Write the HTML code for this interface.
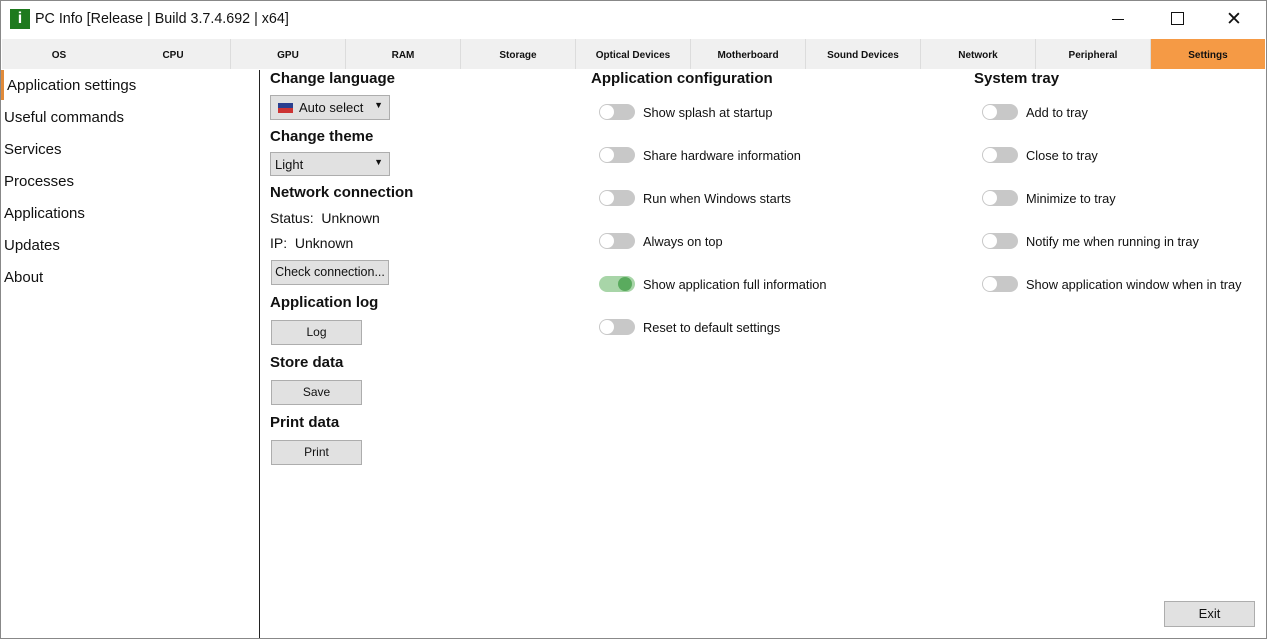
<!DOCTYPE html><html><head><style>
body{margin:0;width:1267px;height:639px;background:#fff;font-family:"Liberation Sans",sans-serif;position:relative;overflow:hidden;border:0}
.a{position:absolute}
.tab{position:absolute;top:39px;height:30px;width:114px;background:#f0f0f0;border-right:1px solid #dcdcdc;font-size:10px;font-weight:bold;text-align:center;line-height:34px;color:#111}
.side{position:absolute;left:4px;font-size:15px;color:#111}
h3{position:absolute;margin:0;font-size:15px;font-weight:bold;color:#111}
.t{position:absolute;font-size:14px;color:#111}
.btn{position:absolute;background:#e1e1e1;border:1px solid #adadad;font-size:12px;text-align:center;box-sizing:border-box;color:#111}
.sw{position:absolute;width:36px;height:16px;border-radius:8px;background:#c8c8c8}
.sw:after{content:"";position:absolute;left:1px;top:1px;width:14px;height:14px;border-radius:50%;background:#fff}
.sw.on{background:#a8d5a8}.sw.on:after{left:19px;background:#5aab5e}
.lb{position:absolute;font-size:12.8px;color:#111}
</style></head><body>
<div class="a" style="left:0;top:0;width:1267px;height:639px;border:1px solid #888;box-sizing:border-box"></div>
<div class="a" style="left:10px;top:9px;width:20px;height:20px;background:#1e7a1e;color:#fff;font-weight:bold;font-size:16px;text-align:center;line-height:20px">i</div>
<div class="a" style="left:35px;top:11px;font-size:14.3px;color:#111">PC Info [Release | Build 3.7.4.692 | x64]</div>
<div class="a" style="left:1112px;top:19px;width:12px;height:1px;background:#111"></div>
<div class="a" style="left:1171px;top:12px;width:11px;height:11px;border:1px solid #111"></div>
<div class="a" style="left:1226px;top:8px;font-size:19px;color:#111">✕</div>
<div class="a" style="left:2px;top:39px;width:1263px;height:30px;background:#f0f0f0"></div>
<div class="tab" style="left:2px">OS</div><div class="tab" style="left:116px">CPU</div><div class="tab" style="left:231px">GPU</div><div class="tab" style="left:346px">RAM</div><div class="tab" style="left:461px">Storage</div><div class="tab" style="left:576px">Optical Devices</div><div class="tab" style="left:691px">Motherboard</div><div class="tab" style="left:806px">Sound Devices</div><div class="tab" style="left:921px">Network</div><div class="tab" style="left:1036px">Peripheral</div>
<div class="tab" style="left:1151px;background:#f59a45;border:0;width:114px">Settings</div>
<div class="a" style="left:1px;top:70px;width:3px;height:30px;background:#e08a3a"></div>
<div class="a" style="left:259px;top:70px;width:1px;height:568px;background:#222"></div>
<div class="side" style="left:7px;top:77px">Application settings</div>
<div class="side" style="top:109px">Useful commands</div>
<div class="side" style="top:141px">Services</div>
<div class="side" style="top:173px">Processes</div>
<div class="side" style="top:205px">Applications</div>
<div class="side" style="top:237px">Updates</div>
<div class="side" style="top:269px">About</div>
<h3 style="left:270px;top:70px">Change language</h3>
<div class="btn" style="left:270px;top:95px;width:120px;height:25px;text-align:left;padding:4px 0 0 7px;font-size:13px"><span style="display:inline-block;width:15px;height:10px;background:linear-gradient(#2a3f8f 50%,#c33 50%);vertical-align:-1px;margin-right:6px"></span>Auto select<span style="position:absolute;right:6px;top:4px;font-size:9px">▼</span></div>
<h3 style="left:270px;top:128px">Change theme</h3>
<div class="btn" style="left:270px;top:152px;width:120px;height:24px;text-align:left;padding:4px 0 0 4px;font-size:13px">Light<span style="position:absolute;right:6px;top:4px;font-size:9px">▼</span></div>
<h3 style="left:270px;top:184px">Network connection</h3>
<div class="t" style="left:270px;top:210px">Status:&nbsp; Unknown</div>
<div class="t" style="left:270px;top:235px">IP:&nbsp; Unknown</div>
<div class="btn" style="left:271px;top:260px;width:118px;height:25px;line-height:23px;font-size:12.5px">Check connection...</div>
<h3 style="left:270px;top:294px">Application log</h3>
<div class="btn" style="left:271px;top:320px;width:91px;height:25px;line-height:23px">Log</div>
<h3 style="left:270px;top:354px">Store data</h3>
<div class="btn" style="left:271px;top:380px;width:91px;height:25px;line-height:23px">Save</div>
<h3 style="left:270px;top:414px">Print data</h3>
<div class="btn" style="left:271px;top:440px;width:91px;height:25px;line-height:23px">Print</div>
<h3 style="left:591px;top:70px">Application configuration</h3>
<div class="sw" style="left:599px;top:104px"></div><div class="lb" style="left:643px;top:105px">Show splash at startup</div>
<div class="sw" style="left:599px;top:147px"></div><div class="lb" style="left:643px;top:148px">Share hardware information</div>
<div class="sw" style="left:599px;top:190px"></div><div class="lb" style="left:643px;top:191px">Run when Windows starts</div>
<div class="sw" style="left:599px;top:233px"></div><div class="lb" style="left:643px;top:234px">Always on top</div>
<div class="sw on" style="left:599px;top:276px"></div><div class="lb" style="left:643px;top:277px">Show application full information</div>
<div class="sw" style="left:599px;top:319px"></div><div class="lb" style="left:643px;top:320px">Reset to default settings</div>
<h3 style="left:974px;top:70px">System tray</h3>
<div class="sw" style="left:982px;top:104px"></div><div class="lb" style="left:1026px;top:105px">Add to tray</div>
<div class="sw" style="left:982px;top:147px"></div><div class="lb" style="left:1026px;top:148px">Close to tray</div>
<div class="sw" style="left:982px;top:190px"></div><div class="lb" style="left:1026px;top:191px">Minimize to tray</div>
<div class="sw" style="left:982px;top:233px"></div><div class="lb" style="left:1026px;top:234px">Notify me when running in tray</div>
<div class="sw" style="left:982px;top:276px"></div><div class="lb" style="left:1026px;top:277px">Show application window when in tray</div>
<div class="btn" style="left:1164px;top:601px;width:91px;height:26px;line-height:24px;font-size:13px">Exit</div>
</body></html>
